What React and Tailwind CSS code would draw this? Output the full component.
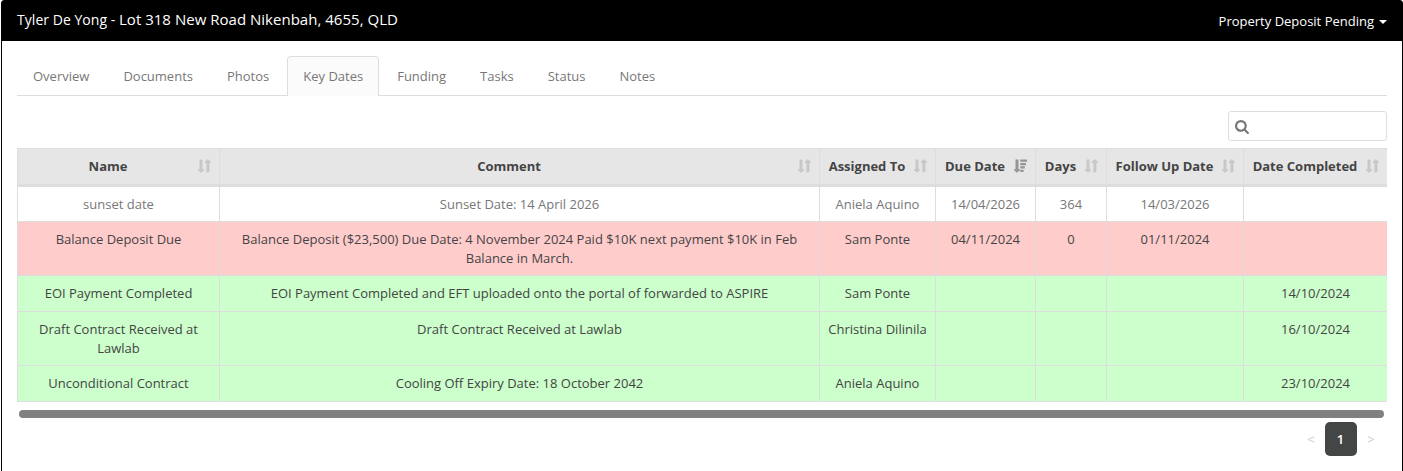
const tabs = ["Overview", "Documents", "Photos", "Key Dates", "Funding", "Tasks", "Status", "Notes"];

const columns = [
  { label: "Name", width: "w-[202px]" },
  { label: "Comment", width: "w-[600px]" },
  { label: "Assigned To", width: "w-[116px]" },
  { label: "Due Date", width: "w-[100px]", sorted: true },
  { label: "Days", width: "w-[71px]" },
  { label: "Follow Up Date", width: "w-[137px]" },
  { label: "Date Completed", width: "w-[144px]" },
];

const rows = [
  { tone: "h-[35px] text-[#777777]", cells: ["sunset date", "Sunset Date: 14 April 2026", "Aniela Aquino", "14/04/2026", "364", "14/03/2026", ""] },
  { tone: "h-[54px] bg-[#ffcccc] text-[#444444]", cells: ["Balance Deposit Due", "Balance Deposit ($23,500) Due Date: 4 November 2024 Paid $10K next payment $10K in Feb Balance in March.", "Sam Ponte", "04/11/2024", "0", "01/11/2024", ""] },
  { tone: "h-[36px] bg-[#ccffcc] text-[#444444]", cells: ["EOI Payment Completed", "EOI Payment Completed and EFT uploaded onto the portal of forwarded to ASPIRE", "Sam Ponte", "", "", "", "14/10/2024"] },
  { tone: "h-[54px] bg-[#ccffcc] text-[#444444]", cells: ["Draft Contract Received at Lawlab", "Draft Contract Received at Lawlab", "Christina Dilinila", "", "", "", "16/10/2024"] },
  { tone: "h-[36px] bg-[#ccffcc] text-[#444444]", cells: ["Unconditional Contract", "Cooling Off Expiry Date: 18 October 2042", "Aniela Aquino", "", "", "", "23/10/2024"] },
];

function SortIcon({ sorted }) {
  if (sorted) {
    return (
      <svg width="13" height="14" viewBox="0 0 13 14" className="-mt-0.5 block shrink-0 text-[#959595]" fill="currentColor">
        <path d="M1.5 .5h3v9.7H6v1L3 13.8 0 11.2v-1h1.5zM6.3 .4h6.7v2.4H6.3zM6.3 3.9h5.6v2.3H6.3zM6.3 7.3h4.5v2.3H6.3zM6.3 10.7h3.3v2.2H6.3z" />
      </svg>
    );
  }
  return (
    <svg width="13" height="14" viewBox="0 0 13 14" className="-mt-0.5 block shrink-0 text-[#c8c8c8]" fill="currentColor">
      <path d="M1.5 .5h3v9.7H6v1L3 13.8 0 11.2v-1h1.5zM8.4 13.3V3.9H6.8V2.8L9.9 0l3 2.8v1.1h-1.5v9.4z" />
    </svg>
  );
}

function SearchIcon() {
  return (
    <svg width="15" height="15" viewBox="0 0 1792 1792" className="block text-[#777777]" fill="currentColor">
      <path d="M1152 832q0-185-131.5-316.5t-316.5-131.5-316.5 131.5-131.5 316.5 131.5 316.5 316.5 131.5 316.5-131.5 131.5-316.5zm512 832q0 54-38 90t-90 38q-54 0-90-38l-343-342q-179 124-399 124-143 0-273.5-55.5t-225-150-150-225-55.5-273.5 55.5-273.5 150-225 225-150 273.5-55.5 273.5 55.5 225 150 150 225 55.5 273.5q0 220-124 399l343 343q37 37 37 90z" />
    </svg>
  );
}

export default function App() {
  return (
    <div className="h-[471px] overflow-hidden bg-white pl-px font-['Open_Sans',sans-serif] text-[13px] leading-[19px] text-[#777777]">
      <div className="h-[480px] rounded-t-[3px] border border-black">
        <header className="flex h-10 items-center justify-between bg-black pl-[15px] pr-[15px] text-white">
          <h1 className="flex items-baseline pb-1">
            <span className="whitespace-pre text-[14px] tracking-[0.04px]">Tyler De Yong - </span>
            <span className="text-[15px] tracking-[0.02px]">Lot 318 New Road Nikenbah, 4655, QLD</span>
          </h1>
          <button className="flex items-center gap-[5px]">
            Property Deposit Pending
            <svg width="8" height="4" viewBox="0 0 8 4" className="mt-px" fill="currentColor"><path d="M0 0h8L4 4z" /></svg>
          </button>
        </header>
        <main className="px-[15px] pt-[15px]">
          <nav className="flex h-10 gap-0.5 border-b border-[#dddddd]">
            {tabs.map((t) => (
              <a
                key={t}
                className={
                  t === "Key Dates"
                    ? "h-10 rounded-t-[4px] border border-b-0 border-[#dddddd] bg-[#fbfbfb] px-[15px] pt-[10px]"
                    : "h-[39px] border border-b-0 border-transparent px-[15px] pt-[10px]"
                }
              >
                {t}
              </a>
            ))}
          </nav>
          <div className="flex justify-end pt-[15px]">
            <label className="flex h-[30px] w-[159px] items-center rounded-[3px] border border-[#dddddd] pl-[6px]">
              <SearchIcon />
              <input aria-label="Search" className="w-[120px] outline-none" />
            </label>
          </div>
          <table className="mt-[7px] w-[1370px] table-fixed border-separate border-spacing-0 text-center">
            <thead>
              <tr className="h-[39px] bg-[#e6e6e6] text-[#444444]">
                {columns.map((c) => (
                  <th key={c.label} className={`${c.width} border-t border-b-[3px] border-l border-[#dddddd] p-0 pr-2 align-middle font-bold`}>
                    <div className="flex items-center">
                      <span className="grow whitespace-nowrap">{c.label}</span>
                      <SortIcon sorted={c.sorted} />
                    </div>
                  </th>
                ))}
              </tr>
            </thead>
            <tbody>
              {rows.map((r) => (
                <tr key={r.cells[0]} className={r.tone}>
                  {r.cells.map((c, i) => (
                    <td key={i} className="border-b border-l border-[#dddddd] px-2 pt-2 pb-0 align-top">{c}</td>
                  ))}
                </tr>
              ))}
            </tbody>
          </table>
          <div className="mx-0.5 mt-2 mr-[3px] h-2 rounded-full bg-[#808080]" />
          <div className="mt-1 flex items-center justify-end text-[#cccccc]">
            <span className="w-[28px] text-center">&lt;</span>
            <span className="flex h-[34px] w-8 items-center justify-center rounded-[5px] bg-[#444645] pr-px font-semibold text-white">1</span>
            <span className="w-[30px] pr-0.5 text-center">&gt;</span>
          </div>
        </main>
      </div>
    </div>
  );
}
